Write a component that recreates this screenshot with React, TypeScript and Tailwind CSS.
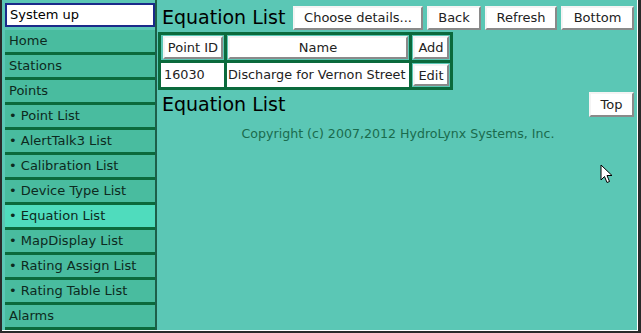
import React from 'react';

const menu = [
  { label: 'Home' },
  { label: 'Stations' },
  { label: 'Points' },
  { label: '• Point List' },
  { label: '• AlertTalk3 List' },
  { label: '• Calibration List' },
  { label: '• Device Type List' },
  { label: '• Equation List', active: true },
  { label: '• MapDisplay List' },
  { label: '• Rating Assign List' },
  { label: '• Rating Table List' },
  { label: 'Alarms' },
];

const Btn = ({ children, className = '' }: { children: React.ReactNode; className?: string }) => (
  <button
    className={`bg-white border-2 border-t-[#f4f4f4] border-l-[#f4f4f4] border-r-[#8a8a8a] border-b-[#8a8a8a] text-[13px] text-[#222] leading-none shrink-0 whitespace-nowrap ${className}`}
  >
    {children}
  </button>
);

const App = () => {
  return (
    <div className="w-[641px] h-[333px] overflow-hidden bg-[#5bc7b5] border-l-2 border-r-[3px] border-b-2 border-[#2a2a2a] flex font-['DejaVu_Sans',sans-serif]">
      <div className="flex-1 flex border-r border-b border-white">
        {/* Left menu */}
        <div className="w-[155px] pl-[3px] pt-[3px] flex flex-col border-r-2 border-[#1d5f49] shrink-0">
          <div className="h-[24px] mb-[3px] bg-white border-2 border-[#1b2a8a] flex items-center px-[3px] text-[13px] text-black">
            System up
          </div>
          {menu.map((m) => (
            <div
              key={m.label}
              className={`h-[25px] shrink-0 flex items-center px-[4px] text-[13px] text-[#0d2a20] border-b-[3px] border-[#0b6a3c] whitespace-nowrap ${
                m.active ? 'bg-[#4fdcbd]' : 'bg-[#49bc9f]'
              }`}
            >
              {m.label}
            </div>
          ))}
        </div>

        {/* Main */}
        <div className="flex-1 min-w-0 pl-[1px] pr-[3px] pt-[4px] flex flex-col">
          <div className="flex items-center gap-[4px] h-[27px]">
            <h1 className="text-[19px] text-black leading-none ml-[4px] mr-auto whitespace-nowrap">Equation List</h1>
            <Btn className="h-[24px] w-[130px]">Choose details...</Btn>
            <Btn className="h-[24px] w-[54px]">Back</Btn>
            <Btn className="h-[24px] w-[72px]">Refresh</Btn>
            <Btn className="h-[24px] w-[73px]">Bottom</Btn>
          </div>

          <table className="mt-[1px] border-[3px] border-[#0b6a3c] border-separate border-spacing-0 w-fit text-[12.8px]">
            <tbody>
              <tr>
                <td className="p-[1px] pl-[2px] border-r-[3px] border-[#0b6a3c]">
                  <Btn className="h-[23px] w-[60px] text-[12.8px]">Point ID</Btn>
                </td>
                <td className="p-[1px] border-r-[3px] border-[#0b6a3c]">
                  <Btn className="h-[23px] w-[180px] text-[12.8px]">Name</Btn>
                </td>
                <td className="p-[1px]">
                  <Btn className="h-[23px] w-[36px] text-[12.8px]">Add</Btn>
                </td>
              </tr>
              <tr>
                <td className="bg-white h-[27px] px-[3px] border-t-[3px] border-r-[3px] border-[#0b6a3c] text-[#222]">16030</td>
                <td className="bg-white px-[1px] border-t-[3px] border-r-[3px] border-[#0b6a3c] text-[#222] whitespace-nowrap">
                  Discharge for Vernon Street
                </td>
                <td className="p-[1px] border-t-[3px] border-[#0b6a3c]">
                  <Btn className="h-[22px] w-[36px] text-[12.8px]">Edit</Btn>
                </td>
              </tr>
            </tbody>
          </table>

          <div className="flex items-center mt-[2px] h-[25px]">
            <h2 className="text-[19px] text-black leading-none ml-[4px] mr-auto whitespace-nowrap">Equation List</h2>
            <Btn className="h-[25px] w-[45px]">Top</Btn>
          </div>

          <p className="text-center text-[12.6px] text-[#1a6b4d] mt-[8px] pl-[4px] whitespace-nowrap">
            Copyright (c) 2007,2012 HydroLynx Systems, Inc.
          </p>

          <div className="flex justify-end pr-[20px] mt-[20px]">
            <svg width="14" height="20" viewBox="0 0 14 20">
              <path d="M1 1 L1 16 L4.5 12.5 L7 18.5 L9.5 17.5 L7 11.5 L12 11.5 Z" fill="white" stroke="black" strokeWidth="1" />
            </svg>
          </div>
        </div>
      </div>
    </div>
  );
};

export default App;
